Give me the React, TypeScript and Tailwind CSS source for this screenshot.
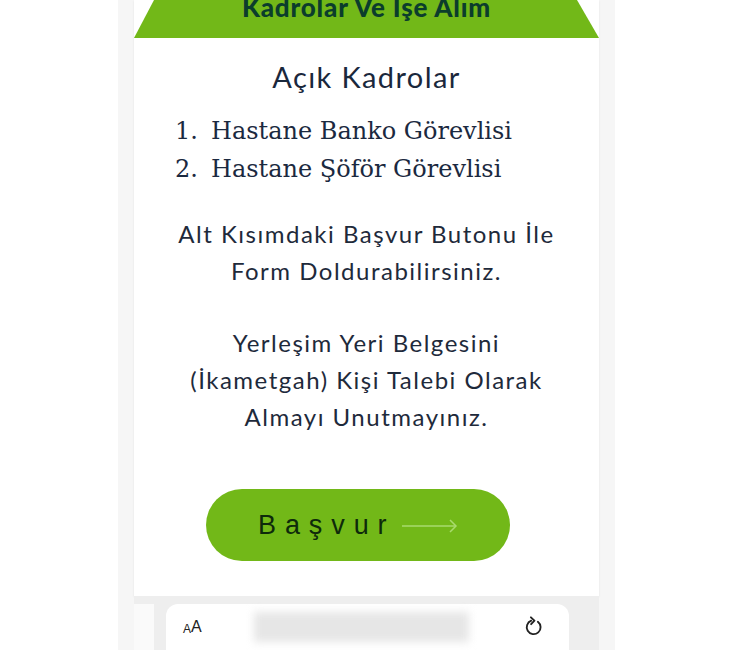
import React from "react";

export default function App() {
  return (
    <div className="w-[733px] h-[650px] overflow-hidden bg-white flex justify-center">
      <div className="w-[497px] h-full bg-[#f6f6f6] flex flex-col items-center">
        <div className="w-[465px] bg-white flex flex-col items-center shadow-[0_1px_2px_rgba(0,0,0,0.08)] pb-[35px]">
          <div className="w-full h-[38px] bg-[#72b818] [clip-path:polygon(20px_0,calc(100%-22px)_0,100%_100%,0_100%)] flex justify-center overflow-hidden">
            <span
              className="text-[26px] leading-[26px] text-[#0b3d2c] -mt-[6px] tracking-[0.8px]"
              style={{ fontFamily: "Lato, 'Open Sans', sans-serif", fontWeight: 900 }}
            >
              Kadrolar Ve İşe Alım
            </span>
          </div>
          <h2
            className="mt-[22px] text-[29px] leading-[34px] text-[#1a283c] tracking-[1.4px] font-normal"
            style={{ fontFamily: "Lato, 'Open Sans', sans-serif" }}
          >
            Açık Kadrolar
          </h2>
          <div
            className="self-start ml-[34px] mt-[18px] flex flex-col text-[24px] leading-[38px] text-[#1b2940]"
            style={{ fontFamily: "'DejaVu Serif', 'Liberation Serif', serif" }}
          >
            <div className="flex">
              <span className="w-[30px] text-right">1.</span>
              <span className="ml-[13px]">Hastane Banko Görevlisi</span>
            </div>
            <div className="flex">
              <span className="w-[30px] text-right">2.</span>
              <span className="ml-[13px]">Hastane Şöför Görevlisi</span>
            </div>
          </div>
          <p
            className="mt-[27px] text-center text-[24px] leading-[37px] text-[#1e2a3b] tracking-[1.5px] font-normal"
            style={{ fontFamily: "Lato, 'Open Sans', sans-serif" }}
          >
            Alt Kısımdaki Başvur Butonu İle
            <br />
            Form Doldurabilirsiniz.
          </p>
          <p
            className="mt-[35px] text-center text-[24px] leading-[37px] text-[#1e2a3b] tracking-[1.5px] font-normal"
            style={{ fontFamily: "Lato, 'Open Sans', sans-serif" }}
          >
            Yerleşim Yeri Belgesini
            <br />
            (İkametgah) Kişi Talebi Olarak
            <br />
            Almayı Unutmayınız.
          </p>
          <button className="mt-[54px] mr-[17px] w-[304px] h-[72px] rounded-full bg-[#72b818] flex items-center pl-[52px]">
            <span
              className="text-[27px] leading-none text-[#0e2a0b] tracking-[0.33em]"
              style={{ fontFamily: "'Liberation Sans', Arial, sans-serif" }}
            >
              Başvur
            </span>
            <svg width="56" height="14" viewBox="0 0 56 14" className="ml-[6px] mt-[2px]">
              <line x1="0" y1="7" x2="54" y2="7" stroke="#a9db6e" strokeWidth="1.5" />
              <polyline points="48,1 54,7 48,13" fill="none" stroke="#a9db6e" strokeWidth="1.5" />
            </svg>
          </button>
        </div>
        <div className="w-[465px] flex-1 bg-[#eeeeee] pt-[8px] flex">
          <div className="w-[20px] bg-[#fafafa]" />
          <div className="w-[12px]" />
          <div className="w-[403px] bg-white rounded-t-[12px] flex items-center px-[17px] relative">
            <span
              className="text-[#222] flex items-end"
              style={{ fontFamily: "'Liberation Sans', Arial, sans-serif" }}
            >
              <span className="text-[12px] leading-none">A</span>
              <span className="text-[16px] leading-none">A</span>
            </span>
            <div className="ml-[52px] w-[215px] h-[30px] bg-[#e6e6e6] blur-[4px]" />
            <svg width="20" height="22" viewBox="0 0 18 20" className="ml-auto mr-[8px]">
              <path d="M12.5 5.2 A6.3 6.3 0 1 1 6.5 4.3" fill="none" stroke="#222" strokeWidth="1.7" strokeLinecap="round" />
              <polyline points="6.2,1.2 9.4,4.2 6.4,7.4" fill="none" stroke="#222" strokeWidth="1.7" strokeLinecap="round" strokeLinejoin="round" />
            </svg>
          </div>
        </div>
      </div>
    </div>
  );
}
